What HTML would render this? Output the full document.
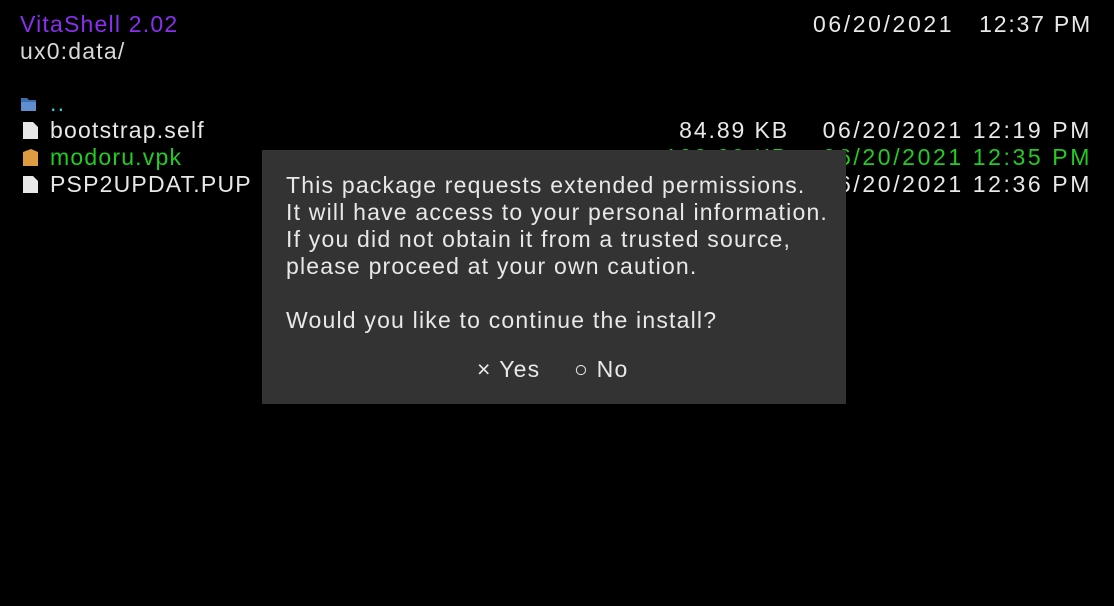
<!DOCTYPE html>
<html><head><meta charset="utf-8"><style>
body{margin:0;width:1114px;height:606px;background:#000;overflow:hidden;font-family:"Liberation Sans",sans-serif;font-size:23px;color:#e8e8e8;position:relative}
.t{position:absolute;white-space:nowrap;line-height:27px;letter-spacing:1.2px}
.n{letter-spacing:2.6px}
.r{text-align:right}
.g{color:#22cc22}
.dlg{position:absolute;left:262px;top:150px;width:584px;height:254px;background:#333}
.ic{position:absolute;width:17px;height:19px}
</style></head><body>
<div class="t" style="left:20px;top:11px;color:#8a2ff0">VitaShell 2.02</div>
<div class="t" style="left:20px;top:38px;color:#d8d8d8">ux0:data/</div>
<div class="t n" style="left:813px;top:11px">06/20/2021</div>
<div class="t" style="right:22px;top:11px;letter-spacing:1.8px">12:37 PM</div>

<svg class="ic" style="left:20px;top:94px" viewBox="0 0 17 19"><path d="M1 4h6l2 2h7v11H1z" fill="#3a6fb0"/><path d="M1 8h15v9H1z" fill="#5f8fcf"/></svg>
<div class="t" style="left:50px;top:90px;color:#2ad0e0">..</div>

<svg class="ic" style="left:22px;top:121px" viewBox="0 0 17 19"><path d="M1 1h10l5 5v12H1z" fill="#e8e8e8"/></svg>
<div class="t" style="left:50px;top:117px">bootstrap.self</div>
<div class="t r" style="right:325px;top:117px;letter-spacing:1.9px">84.89 KB</div>
<div class="t r n" style="right:22px;top:117px">06/20/2021 12:19 PM</div>

<svg class="ic" style="left:22px;top:148px" viewBox="0 0 17 19"><path d="M1 4l8-3 7 3v14H1z" fill="#e09a40"/></svg>
<div class="t g" style="left:50px;top:144px">modoru.vpk</div>
<div class="t r g" style="right:325px;top:144px;letter-spacing:1.9px">100.00 KB</div>
<div class="t r g n" style="right:22px;top:144px">06/20/2021 12:35 PM</div>

<svg class="ic" style="left:22px;top:175px" viewBox="0 0 17 19"><path d="M1 1h10l5 5v12H1z" fill="#e8e8e8"/></svg>
<div class="t" style="left:50px;top:171px">PSP2UPDAT.PUP</div>
<div class="t r n" style="right:22px;top:171px">06/20/2021 12:36 PM</div>

<div class="dlg">
<div class="t" style="left:24px;top:22px">This package requests extended permissions.<br>It will have access to your personal information.<br>If you did not obtain it from a trusted source,<br>please proceed at your own caution.<br><br>Would you like to continue the install?</div>
<div class="t" style="left:215px;top:206px">×&nbsp;Yes</div>
<div class="t" style="left:312px;top:206px">○&nbsp;No</div>
</div>
</body></html>
